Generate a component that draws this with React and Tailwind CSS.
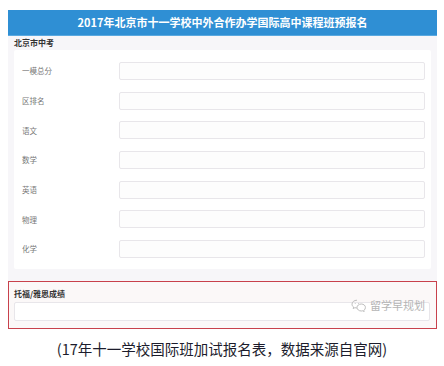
import React from 'react'

const FIELDS = ['一模总分', '区排名', '语文', '数学', '英语', '物理', '化学']

const FONT = { fontFamily: '"Noto Sans CJK SC", "Microsoft YaHei", sans-serif' }

function WechatMark() {
  return (
    <svg width="16" height="13" viewBox="0 0 16 13" fill="none" stroke="#bdbdbd" strokeWidth="1">
      <path d="M6 1.2C3.1 1.2 1 3 1 5.2c0 1.2.6 2.2 1.6 2.9l-.4 1.5 1.7-.9c.6.2 1.3.3 2 .3" />
      <circle cx="4.2" cy="4.4" r=".5" fill="#bdbdbd" stroke="none" />
      <circle cx="7.4" cy="4.4" r=".5" fill="#bdbdbd" stroke="none" />
      <path d="M10.3 5C7.9 5 6 6.6 6 8.5s1.9 3.5 4.3 3.5c.5 0 1-.1 1.5-.2l1.4.8-.3-1.3c.9-.6 1.5-1.6 1.5-2.7C14.6 6.6 12.7 5 10.3 5z" />
    </svg>
  )
}

export default function App() {
  return (
    <div className="w-[444px] h-[366px] bg-white overflow-hidden" style={FONT}>
      <div className="pl-[8px] pr-[7px] pt-[10px]">
        {/* Header */}
        <div className="h-[26px] bg-[#2f8fd4] border-b border-[#5aa9e0] flex items-center justify-center">
          <h1 className="text-[11px] font-bold text-white leading-none">
            2017年北京市十一学校中外合作办学国际高中课程班预报名
          </h1>
        </div>

        {/* Form panel */}
        <div className="bg-[#f7f6f9] px-[6px]">
          <div className="h-[14px] flex items-center text-[8px] font-bold text-[#333] leading-none">
            北京市中考
          </div>
          <div className="bg-white rounded-[2px] pt-[12px] pb-[11px] pl-[8px] pr-[6px] flex flex-col gap-[11.67px]">
            {FIELDS.map((label) => (
              <div key={label} className="flex items-center h-[18px]">
                <span className="w-[97px] text-[7.5px] text-[#777] leading-none">{label}</span>
                <div className="flex-1 h-[18px] rounded-[2px] border border-[#e8e6ea] bg-[#fdfdfd]" />
              </div>
            ))}
          </div>
          <div className="h-[12px]" />
        </div>

        {/* Highlighted field */}
        <div className="h-[48px] border-[1.5px] border-[#c8414c] bg-[#fbf8f8] pl-[5px] pr-[6px] pt-[8px]">
          <div className="text-[8px] font-bold text-[#333] leading-none h-[12px]">托福/雅思成绩</div>
          <div className="relative h-[19px] rounded-[2px] border border-[#e8e6ea] bg-white">
            <div className="absolute right-[4px] top-[-4px] flex items-center gap-[3px] text-[11px] text-[#b5b5b5] leading-none">
              <WechatMark />
              <span>留学早规划</span>
            </div>
          </div>
        </div>
      </div>

      {/* Caption */}
      <p className="mt-[13px] text-center text-[14.5px] text-[#1c1c2c] leading-none">
        (17年十一学校国际班加试报名表，数据来源自官网)
      </p>
    </div>
  )
}
